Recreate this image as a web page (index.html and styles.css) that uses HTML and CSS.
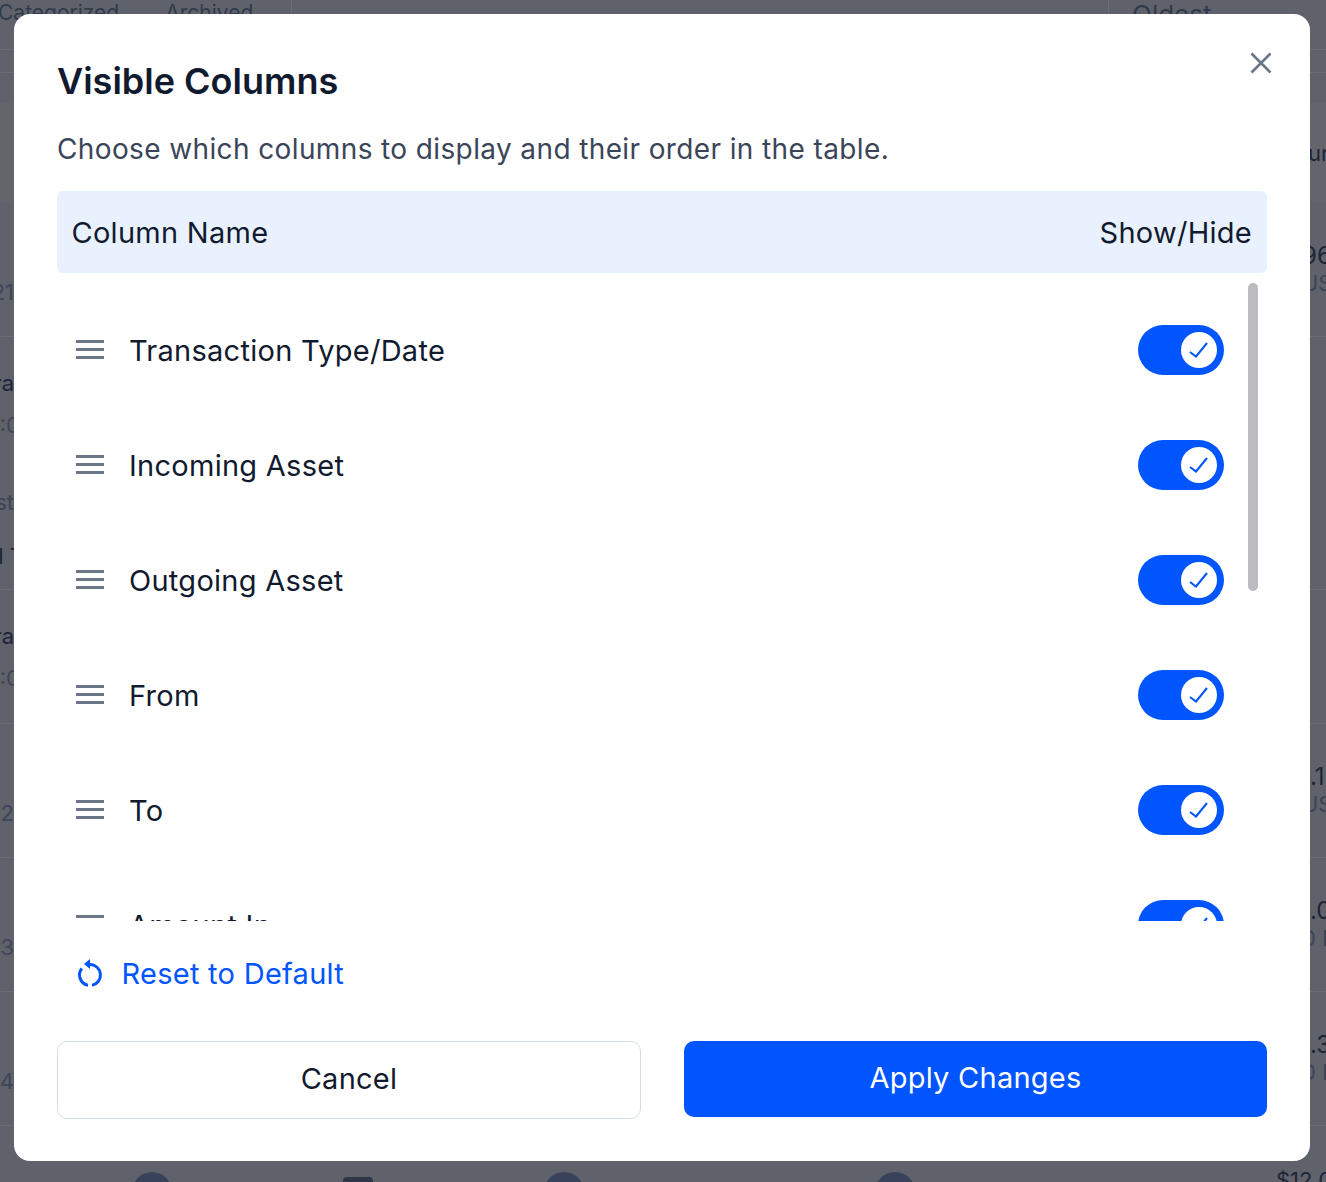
FILE: index.html
```html
<!DOCTYPE html>
<html>
  <head>
    <link rel="stylesheet" href="styles.css">
  </head>
  <body>
    <!-- Dimmed table behind the modal -->
    <div class="page">
      <div class="tabs">
        <span class="tab tab-first">Categorized</span>
        <span class="tab tab-second">Archived</span>
        <span class="tab-spacer"></span>
        <span class="tab tab-sort">Oldest</span>
      </div>
      <div class="sub-bar"></div>
      <div class="table-head">
        <span class="head-text">ur</span>
      </div>
      <div class="table-row row-a">
        <div class="cell-left"><span class="dim pad-77">21</span></div>
        <div class="cell-right"><span class="pad-40">96</span><span class="dim tight">US</span></div>
      </div>
      <div class="table-row row-b">
        <div class="cell-left"><span class="strong pad-33">Tra</span><span class="dim gap-15 cut">12:0</span></div>
      </div>
      <div class="table-row row-b tall">
        <div class="cell-left"><span class="dim pad-33">Cost</span><span class="total gap-27">Total T</span></div>
      </div>
      <div class="table-row row-c">
        <div class="cell-left"><span class="strong pad-33">Tra</span><span class="dim gap-15 cut">11:0</span></div>
      </div>
      <div class="table-row row-c">
        <div class="cell-left"><span class="dim pad-77">2</span></div>
        <div class="cell-right"><span class="pad-40 near">.1</span><span class="dim tight">US</span></div>
      </div>
      <div class="table-row row-c">
        <div class="cell-left"><span class="dim pad-77">3</span></div>
        <div class="cell-right"><span class="pad-40 near">.0</span><span class="dim tight">0 I</span></div>
      </div>
      <div class="table-row row-c">
        <div class="cell-left"><span class="dim pad-77">4</span></div>
        <div class="cell-right"><span class="pad-40 near">.3</span><span class="dim tight">0 I</span></div>
      </div>
      <div class="table-foot">
        <span class="avatar avatar-1"></span>
        <span class="avatar-square"></span>
        <span class="avatar avatar-2"></span>
        <span class="avatar avatar-3"></span>
        <span class="foot-amount">$12.00</span>
      </div>
    </div>

    <div class="modal">
      <button class="close" aria-label="Close">
        <svg width="24" height="24" viewBox="0 0 24 24">
          <path d="M2.5 2.5 L21.5 21.5 M21.5 2.5 L2.5 21.5" />
        </svg>
      </button>
      <h2 class="title">Visible Columns</h2>
      <p class="subtitle">Choose which columns to display and their order in the table.</p>

      <div class="list-head">
        <span>Column Name</span>
        <span>Show/Hide</span>
      </div>

      <div class="list">
        <div class="scrollbar"></div>
        <div class="list-row">
          <span class="drag"><i></i><i></i><i></i></span>
          <span class="name">Transaction Type/Date</span>
          <span class="switch"><span class="knob"><svg width="36" height="36" viewBox="0 0 36 36"><path d="M9 20 L15 24.5 L26 11" /></svg></span></span>
        </div>
        <div class="list-row">
          <span class="drag"><i></i><i></i><i></i></span>
          <span class="name">Incoming Asset</span>
          <span class="switch"><span class="knob"><svg width="36" height="36" viewBox="0 0 36 36"><path d="M9 20 L15 24.5 L26 11" /></svg></span></span>
        </div>
        <div class="list-row">
          <span class="drag"><i></i><i></i><i></i></span>
          <span class="name">Outgoing Asset</span>
          <span class="switch"><span class="knob"><svg width="36" height="36" viewBox="0 0 36 36"><path d="M9 20 L15 24.5 L26 11" /></svg></span></span>
        </div>
        <div class="list-row">
          <span class="drag"><i></i><i></i><i></i></span>
          <span class="name">From</span>
          <span class="switch"><span class="knob"><svg width="36" height="36" viewBox="0 0 36 36"><path d="M9 20 L15 24.5 L26 11" /></svg></span></span>
        </div>
        <div class="list-row">
          <span class="drag"><i></i><i></i><i></i></span>
          <span class="name">To</span>
          <span class="switch"><span class="knob"><svg width="36" height="36" viewBox="0 0 36 36"><path d="M9 20 L15 24.5 L26 11" /></svg></span></span>
        </div>
        <div class="list-row">
          <span class="drag"><i></i><i></i><i></i></span>
          <span class="name">Amount In</span>
          <span class="switch"><span class="knob"><svg width="36" height="36" viewBox="0 0 36 36"><path d="M9 20 L15 24.5 L26 11" /></svg></span></span>
        </div>
      </div>

      <a class="reset">
        <svg width="28" height="30" viewBox="0 0 28 30">
          <path class="arc" d="M14 5.5 A10.5 10.5 0 0 1 16 26.3 M12 26.3 A10.5 10.5 0 0 1 5.8 9.5" />
          <path class="tip" d="M8 5 L14 0 L14 10 Z" />
        </svg>
        <span class="reset-label">Reset to Default</span>
      </a>

      <div class="actions">
        <button class="btn btn-cancel">Cancel</button>
        <button class="btn btn-apply">Apply Changes</button>
      </div>
    </div>
  </body>
</html>
```

FILE: styles.css
```css
html,
body {
  margin: 0;
  padding: 0;
  height: 1182px;
  overflow: hidden;
}

body {
  background: #5f626b;
  font-family: Inter, "Liberation Sans", sans-serif;
  color: #111a2e;
}

/* Page behind the modal */
.page {
  height: 1182px;
  overflow: hidden;
  color: #1d2536;
  font-size: 26px;
  line-height: 32px;
}

.tabs {
  display: flex;
  height: 50px;
  box-sizing: border-box;
  border-bottom: 1px solid #6b6e77;
  color: #313a4b;
}

.tab {
  white-space: nowrap;
  margin-top: -1px;
}

.tab-first {
  margin-left: -2px;
  font-size: 21px;
  margin-top: -3px;
}

.tab-second {
  margin-left: 46px;
  width: 126px;
  font-size: 21px;
  margin-top: -3px;
  border-right: 1px solid #6b6e77;
}

.tab-spacer {
  flex: 1;
}

.tab-sort {
  width: 194px;
  padding-left: 23px;
  border-left: 1px solid #6b6e77;
}

.sub-bar {
  height: 23px;
  box-sizing: border-box;
  border-bottom: 1px solid #6b6e77;
  margin-bottom: 30px;
}

.table-head {
  display: flex;
  justify-content: flex-end;
  align-items: center;
  height: 100px;
  background: #63656d;
}

.head-text {
  width: 18px;
  font-size: 22px;
  white-space: nowrap;
}

.table-row {
  display: flex;
  justify-content: space-between;
  box-sizing: border-box;
  border-bottom: 1px solid #6b6e77;
}

.row-a {
  height: 134px;
}

.row-b {
  height: 119px;
  border-bottom: none;
}

.row-b.tall {
  height: 134px;
  border-bottom: 1px solid #6b6e77;
}

.row-c {
  height: 134px;
}

.cell-left {
  width: 14px;
  overflow: hidden;
  display: flex;
  flex-direction: column;
  align-items: flex-end;
  white-space: nowrap;
}

.cell-right {
  width: 24px;
  margin-left: auto;
  display: flex;
  flex-direction: column;
  white-space: nowrap;
  font-size: 24px;
}

.strong {
  color: #1d2536;
  font-size: 22px;
}

.total {
  color: #1d2536;
  font-size: 22px;
  margin-right: -10px;
}

.dim {
  color: #3d4556;
  font-size: 22px;
}

.cut {
  margin-right: -6px;
}

.near {
  margin-left: 8px;
}

.tight {
  margin-top: -5px;
}

.pad-33 {
  margin-top: 30px;
}

.pad-40 {
  margin-top: 37px;
}

.pad-77 {
  margin-top: 73px;
}

.gap-15 {
  margin-top: 10px;
}

.gap-27 {
  margin-top: 22px;
}

.table-foot {
  display: flex;
  align-items: flex-start;
  padding: 46px 0 0 132px;
}

.avatar {
  flex: none;
  width: 40px;
  height: 40px;
  border-radius: 50%;
  background: #38425a;
}

.avatar-square {
  flex: none;
  width: 30px;
  height: 20px;
  margin: 5px 0 0 171px;
  border-radius: 4px 4px 0 0;
  background: #2e3648;
}

.avatar-2 {
  margin-left: 171px;
}

.avatar-3 {
  margin-left: 291px;
}

.foot-amount {
  margin-left: auto;
  margin-top: -8px;
  font-size: 22px;
  margin-right: -20px;
}

/* Modal */
.modal {
  position: fixed;
  left: 14px;
  top: 14px;
  width: 1296px;
  height: 1147px;
  box-sizing: border-box;
  padding: 43px 43px 0;
  background: #fff;
  border-radius: 16px;
}

.close {
  position: absolute;
  top: 37px;
  right: 37px;
  width: 24px;
  height: 24px;
  padding: 0;
  border: none;
  background: none;
  display: block;
}

.close svg {
  display: block;
}

.close path {
  fill: none;
  stroke: #6b7689;
  stroke-width: 2.6;
}

.title {
  margin: 0;
  font-size: 36px;
  line-height: 48px;
  font-weight: 600;
  color: #111a2e;
}

.subtitle {
  margin: 24px 0 0 0;
  font-size: 28px;
  line-height: 40px;
  letter-spacing: 0.38px;
  color: #3a4559;
}

.list-head {
  display: flex;
  justify-content: space-between;
  align-items: center;
  height: 82px;
  margin-top: 22px;
  padding: 1px 15px 0 14.5px;
  box-sizing: border-box;
  background: #eaf1fe;
  border-radius: 6px;
  font-size: 29px;
  letter-spacing: 0.27px;
}

.list {
  position: relative;
  height: 648px;
  padding-top: 19px;
  box-sizing: border-box;
  overflow: hidden;
}

.scrollbar {
  position: absolute;
  top: 10px;
  left: 1191px;
  width: 10px;
  height: 308px;
  border-radius: 5px;
  background: #bbbbc0;
}

.list-row {
  display: flex;
  align-items: center;
  height: 115px;
  padding-left: 19px;
}

.drag {
  display: flex;
  flex-direction: column;
  gap: 5px;
  width: 28px;
  flex: none;
}

.drag i {
  display: block;
  height: 3px;
  background: #6b7689;
}

.name {
  margin-left: 25px;
  padding-top: 1px;
  font-size: 29px;
  letter-spacing: 0.27px;
}

.switch {
  display: flex;
  align-items: center;
  justify-content: flex-end;
  width: 86px;
  height: 50px;
  box-sizing: border-box;
  margin-left: auto;
  margin-right: 43px;
  padding-right: 7px;
  border-radius: 25px;
  background: #0055ff;
}

.knob {
  width: 36px;
  height: 36px;
  border-radius: 50%;
  background: #fff;
}

.knob svg {
  display: block;
}

.knob path {
  fill: none;
  stroke: #0055ff;
  stroke-width: 2;
}

.reset {
  display: flex;
  align-items: center;
  height: 40px;
  margin: 33px 0 0 19px;
  color: #0055ff;
  font-size: 29px;
  letter-spacing: 0.27px;
}

.reset-label {
  padding-bottom: 2px;
}

.reset svg {
  flex: none;
  margin-right: 17.5px;
}

.reset .arc {
  fill: none;
  stroke: #0055ff;
  stroke-width: 3;
}

.reset .tip {
  fill: #0055ff;
}

.actions {
  display: flex;
  gap: 43px;
  align-items: flex-start;
  margin-top: 47px;
}

.btn {
  font-family: inherit;
  font-size: 29px;
  letter-spacing: 0.25px;
  border-radius: 10px;
  padding: 0 0 4px;
}

.btn-cancel {
  flex: 0 0 584px;
  height: 78px;
  background: #fff;
  border: 1px solid #d5dcef;
  color: #111a2e;
}

.btn-apply {
  flex: 1;
  height: 76px;
  background: #0055ff;
  border: none;
  color: #fff;
}
```
